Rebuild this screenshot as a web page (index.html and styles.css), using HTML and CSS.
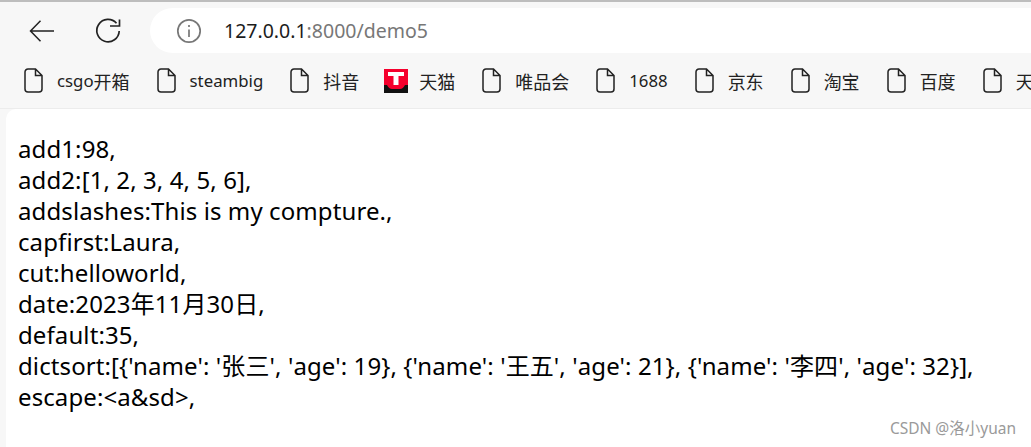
FILE: index.html
```html
<!DOCTYPE html>
<html>
<head>
    <title>demo5</title>
    <link rel="stylesheet" href="styles.css">
</head>
<body>
    <div class="toolbar">
        <svg class="nav-icon back" width="28" height="28" viewBox="0 0 28 28"><path d="M2.500 14H26M12.500 3.800L2.500 14L12.500 24.200" fill="none" stroke="#222" stroke-width="1.500"/></svg>
        <svg class="nav-icon reload" width="28" height="28" viewBox="0 0 28 28"><path d="M22.500 6.300A11.200 11.200 0 1 0 25.200 14M25.500 2.500V9H16" fill="none" stroke="#222" stroke-width="1.700"/></svg>
        <div class="address">
            <svg class="info" width="26" height="26" viewBox="0 0 26 26"><circle cx="13" cy="13" r="11.200" fill="none" stroke="#777" stroke-width="1.700"/><path d="M13 11.500V19M13 7V9" stroke="#777" stroke-width="1.700"/></svg>
            <span class="host">127.0.0.1</span><span class="path">:8000/demo5</span>
        </div>
    </div>
    <div class="bookmarks">
        <div class="mark"><svg class="doc" width="19" height="25" viewBox="0 0 19 25"><path d="M4 1H11.500L18 7.500V21A3 3 0 0 1 15 24H4A3 3 0 0 1 1 21V4A3 3 0 0 1 4 1ZM11.500 1V7.500H18" fill="none" stroke="#222" stroke-width="1.500"/></svg>csgo<span class="cn">开箱</span></div>
        <div class="mark"><svg class="doc" width="19" height="25" viewBox="0 0 19 25"><path d="M4 1H11.500L18 7.500V21A3 3 0 0 1 15 24H4A3 3 0 0 1 1 21V4A3 3 0 0 1 4 1ZM11.500 1V7.500H18" fill="none" stroke="#222" stroke-width="1.500"/></svg>steambig</div>
        <div class="mark"><svg class="doc" width="19" height="25" viewBox="0 0 19 25"><path d="M4 1H11.500L18 7.500V21A3 3 0 0 1 15 24H4A3 3 0 0 1 1 21V4A3 3 0 0 1 4 1ZM11.500 1V7.500H18" fill="none" stroke="#222" stroke-width="1.500"/></svg><span class="cn">抖音</span></div>
        <div class="mark shop"><svg class="logo" width="24" height="24" viewBox="0 0 24 24"><rect width="24" height="24" fill="#f5002d"/><path d="M0 16H3Q5 20 8 20H16Q19 20 21 16H24V24H0Z" fill="#111"/><path d="M4 3H20V7H14.500V16H9.500V7H4Z" fill="#fff"/></svg><span class="cn">天猫</span></div>
        <div class="mark"><svg class="doc" width="19" height="25" viewBox="0 0 19 25"><path d="M4 1H11.500L18 7.500V21A3 3 0 0 1 15 24H4A3 3 0 0 1 1 21V4A3 3 0 0 1 4 1ZM11.500 1V7.500H18" fill="none" stroke="#222" stroke-width="1.500"/></svg><span class="cn">唯品会</span></div>
        <div class="mark"><svg class="doc" width="19" height="25" viewBox="0 0 19 25"><path d="M4 1H11.500L18 7.500V21A3 3 0 0 1 15 24H4A3 3 0 0 1 1 21V4A3 3 0 0 1 4 1ZM11.500 1V7.500H18" fill="none" stroke="#222" stroke-width="1.500"/></svg>1688</div>
        <div class="mark"><svg class="doc" width="19" height="25" viewBox="0 0 19 25"><path d="M4 1H11.500L18 7.500V21A3 3 0 0 1 15 24H4A3 3 0 0 1 1 21V4A3 3 0 0 1 4 1ZM11.500 1V7.500H18" fill="none" stroke="#222" stroke-width="1.500"/></svg><span class="cn">京东</span></div>
        <div class="mark"><svg class="doc" width="19" height="25" viewBox="0 0 19 25"><path d="M4 1H11.500L18 7.500V21A3 3 0 0 1 15 24H4A3 3 0 0 1 1 21V4A3 3 0 0 1 4 1ZM11.500 1V7.500H18" fill="none" stroke="#222" stroke-width="1.500"/></svg><span class="cn">淘宝</span></div>
        <div class="mark"><svg class="doc" width="19" height="25" viewBox="0 0 19 25"><path d="M4 1H11.500L18 7.500V21A3 3 0 0 1 15 24H4A3 3 0 0 1 1 21V4A3 3 0 0 1 4 1ZM11.500 1V7.500H18" fill="none" stroke="#222" stroke-width="1.500"/></svg><span class="cn">百度</span></div>
        <div class="mark"><svg class="doc" width="19" height="25" viewBox="0 0 19 25"><path d="M4 1H11.500L18 7.500V21A3 3 0 0 1 15 24H4A3 3 0 0 1 1 21V4A3 3 0 0 1 4 1ZM11.500 1V7.500H18" fill="none" stroke="#222" stroke-width="1.500"/></svg><span class="cn">天猫</span></div>
    </div>
    <div class="page">
        add1:98,<br>
        add2:[1, 2, 3, 4, 5, 6],<br>
        addslashes:This is my compture.,<br>
        capfirst:Laura,<br>
        cut:helloworld,<br>
        date:2023年11月30日,<br>
        default:35,<br>
        dictsort:[{'name': '张三', 'age': 19}, {'name': '王五', 'age': 21}, {'name': '李四', 'age': 32}],<br>
        escape:&lt;a&amp;sd&gt;,
    </div>
    <div class="watermark">CSDN @洛小yuan</div>
</body>
</html>
```
FILE: styles.css
```css
html, body {
    height: 100%;
}

body {
    margin: 0;
    overflow: hidden;
    background-color: #f7f7f7;
    border-top: 2px solid #bdbdbd;
    box-sizing: border-box;
    font-family: "Noto Sans", "Noto Sans CJK SC", sans-serif;
    color: #000;
    display: flex;
    flex-direction: column;
}

.toolbar {
    height: 45px;
    margin-top: 6px;
    display: flex;
    align-items: center;
    padding-left: 28px;
    flex-shrink: 0;
}

.nav-icon {
    flex-shrink: 0;
}

.reload {
    margin-left: 38px;
}

.address {
    margin-left: 28px;
    flex: 1;
    height: 45px;
    background-color: #fff;
    border-radius: 23px 0 0 23px;
    display: flex;
    align-items: center;
    padding-left: 26px;
    font-size: 19.500px;
}

.info {
    margin-right: 22px;
}

.host {
    color: #1c1c1c;
}

.path {
    color: #777;
}

.bookmarks {
    height: 56px;
    display: flex;
    align-items: center;
    gap: 27px;
    padding-left: 24px;
    overflow: hidden;
    white-space: nowrap;
    font-size: 16.800px;
    color: #222;
    border-bottom: 1px solid #ececec;
    flex-shrink: 0;
    box-sizing: border-box;
}

.mark {
    display: flex;
    align-items: center;
    flex-shrink: 0;
}

.cn {
    font-size: 18px;
}

.shop {
    margin-left: -2px;
}

.doc {
    margin-right: 14px;
}

.logo {
    margin-right: 11px;
}

.page {
    flex: 1;
    margin-left: 6px;
    background-color: #fff;
    border-radius: 10px 0 0 0;
    padding: 24px 0 0 12px;
    font-size: 24px;
    letter-spacing: 0.1px;
    line-height: 31px;
    white-space: nowrap;
    overflow: hidden;
}

.watermark {
    position: absolute;
    right: 15px;
    bottom: 8px;
    font-size: 15.500px;
    color: #9a9a9a;
}
```
